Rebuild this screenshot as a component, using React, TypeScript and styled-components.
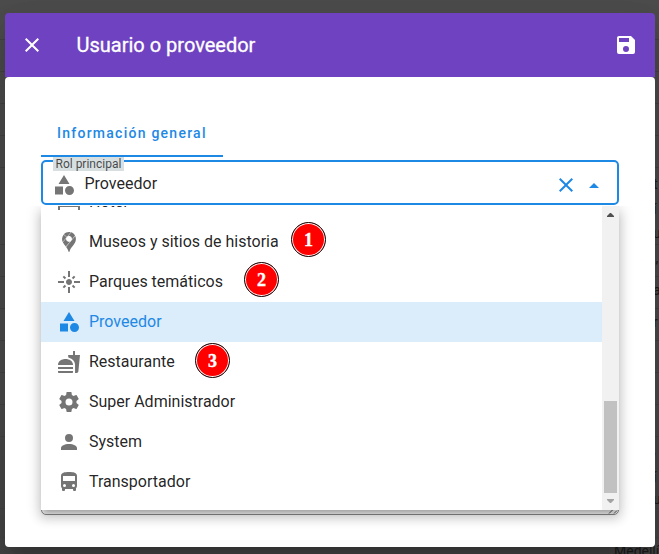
import React from "react";
import styled, { createGlobalStyle } from "styled-components";

const GlobalStyle = createGlobalStyle`
  *, *::before, *::after { box-sizing: border-box; }
  body { margin: 0; background: #424242; font-family: Roboto, sans-serif; overflow: hidden; }
`;

const icons = {
  close:
    "M19,6.41L17.59,5L12,10.59L6.41,5L5,6.41L10.59,12L5,17.59L6.41,19L12,13.41L17.59,19L19,17.59L13.41,12L19,6.41Z",
  save:
    "M15,9H5V5H15M12,19A3,3 0 0,1 9,16A3,3 0 0,1 12,13A3,3 0 0,1 15,16A3,3 0 0,1 12,19M17,3H5C3.89,3 3,3.9 3,5V19A2,2 0 0,0 5,21H19A2,2 0 0,0 21,19V7L17,3Z",
  menuUp: "M7,15L12,10L17,15H7Z",
  shape:
    "M11,13.5V21.5H3V13.5H11M12,2L17.5,11H6.5L12,2M17.5,13C20,13 22,15 22,17.5C22,20 20,22 17.5,22C15,22 13,20 13,17.5C13,15 15,13 17.5,13Z",
  bed:
    "M19,7H11V14H3V5H1V20H3V17H21V20H23V11A4,4 0 0,0 19,7M7,13A3,3 0 0,0 10,10A3,3 0 0,0 7,7A3,3 0 0,0 4,10A3,3 0 0,0 7,13Z",
  maps:
    "M18.27 6C19.28 8.17 19.05 10.73 17.94 12.81C17 14.5 15.65 15.93 14.5 17.5C14 18.2 13.5 18.95 13.13 19.76C13 20.03 12.91 20.31 12.81 20.59C12.71 20.87 12.62 21.15 12.53 21.43C12.44 21.69 12.33 22 12 22H12C11.61 22 11.5 21.56 11.42 21.26C11.18 20.53 10.94 19.83 10.57 19.16C10.15 18.37 9.62 17.64 9.08 16.93L18.27 6M9.12 8.42L5.82 12.34C6.43 13.63 7.34 14.73 8.21 15.83C8.42 16.08 8.63 16.34 8.83 16.61L13 11.67L12.96 11.68C11.5 12.18 9.88 11.44 9.3 10C9.22 9.83 9.16 9.63 9.12 9.43C9.06 9.06 9.05 8.79 9.12 8.42L9.12 8.42M6.58 4.62L6.57 4.63C4.95 6.68 4.67 9.53 5.64 11.94L9.63 7.2L9.58 7.15L6.58 4.62M14.22 2.36L11 6.17L11.04 6.16C12.38 5.7 13.88 6.28 14.56 7.5C14.71 7.78 14.83 8.08 14.87 8.38C14.93 8.76 14.95 9.03 14.88 9.4L14.88 9.41L18.08 5.61C17.24 4.09 15.87 2.93 14.23 2.37L14.22 2.36M9.89 6.89L13.8 2.24L13.76 2.23C13.18 2.08 12.59 2 12 2C10.03 2 8.17 2.85 6.85 4.31L6.83 4.32L9.89 6.89Z",
  flare:
    "M7 11H1v2h6v-2zm2.17-3.24L7.05 5.64 5.64 7.05l2.12 2.12 1.41-1.41zM13 1h-2v6h2V1zm5.36 6.05l-1.41-1.41-2.12 2.12 1.41 1.41 2.12-2.12zM17 11v2h6v-2h-6zm-5-2c-1.66 0-3 1.34-3 3s1.34 3 3 3 3-1.34 3-3-1.34-3-3-3zm2.83 7.24l2.12 2.12 1.41-1.41-2.12-2.12-1.41 1.41zm-9.19.71l1.41 1.41 2.12-2.12-1.41-1.41-2.12 2.12zM11 23h2v-6h-2v6z",
  food:
    "M18.06 22.99h1.66c.84 0 1.53-.64 1.63-1.46L23 5.05h-5V1h-1.97v4.05h-4.97l.3 2.34c1.71.47 3.31 1.32 4.27 2.26 1.44 1.42 2.43 2.89 2.43 5.29v8.05zM1 21.99V21h15.03v.99c0 .55-.45 1-1.01 1H2.01c-.56 0-1.01-.45-1.01-1zm15.03-7c0-8-15.03-8-15.03 0h15.03zM1.02 17h15v2h-15z",
  cog:
    "M12,15.5A3.5,3.5 0 0,1 8.5,12A3.5,3.5 0 0,1 12,8.5A3.5,3.5 0 0,1 15.5,12A3.5,3.5 0 0,1 12,15.5M19.43,12.97C19.47,12.65 19.5,12.33 19.5,12C19.5,11.67 19.47,11.34 19.43,11L21.54,9.37C21.73,9.22 21.78,8.95 21.66,8.73L19.66,5.27C19.54,5.05 19.27,4.96 19.05,5.05L16.56,6.05C16.04,5.66 15.5,5.32 14.87,5.07L14.5,2.42C14.46,2.18 14.25,2 14,2H10C9.75,2 9.54,2.18 9.5,2.42L9.13,5.07C8.5,5.32 7.96,5.66 7.44,6.05L4.95,5.05C4.73,4.96 4.46,5.05 4.34,5.27L2.34,8.73C2.21,8.95 2.27,9.22 2.46,9.37L4.57,11C4.53,11.34 4.5,11.67 4.5,12C4.5,12.33 4.53,12.65 4.57,12.97L2.46,14.63C2.27,14.78 2.21,15.05 2.34,15.27L4.34,18.73C4.46,18.95 4.73,19.03 4.95,18.95L7.44,17.94C7.96,18.34 8.5,18.68 9.13,18.93L9.5,21.58C9.54,21.82 9.75,22 10,22H14C14.25,22 14.46,21.82 14.5,21.58L14.87,18.93C15.5,18.67 16.04,18.34 16.56,17.94L19.05,18.95C19.27,19.03 19.54,18.95 19.66,18.73L21.66,15.27C21.78,15.05 21.73,14.78 21.54,14.63L19.43,12.97Z",
  account:
    "M12,4A4,4 0 0,1 16,8A4,4 0 0,1 12,12A4,4 0 0,1 8,8A4,4 0 0,1 12,4M12,14C16.42,14 20,15.79 20,18V20H4V18C4,15.79 7.58,14 12,14Z",
  bus:
    "M18,11H6V6H18M16.5,17A1.5,1.5 0 0,1 15,15.5A1.5,1.5 0 0,1 16.5,14A1.5,1.5 0 0,1 18,15.5A1.5,1.5 0 0,1 16.5,17M7.5,17A1.5,1.5 0 0,1 6,15.5A1.5,1.5 0 0,1 7.5,14A1.5,1.5 0 0,1 9,15.5A1.5,1.5 0 0,1 7.5,17M4,16C4,16.88 4.39,17.67 5,18.22V20A1,1 0 0,0 6,21H7A1,1 0 0,0 8,20V19H16V20A1,1 0 0,0 17,21H18A1,1 0 0,0 19,20V18.22C19.61,17.67 20,16.88 20,16V6C20,2.5 16.42,2 12,2C7.58,2 4,2.5 4,6V16Z",
};
type IconName = keyof typeof icons;

const Svg = styled.svg`
  display: block;
  flex: none;
  fill: currentColor;
`;
const Icon = ({ name, size = 24 }: { name: IconName; size?: number }) => (
  <Svg width={size} height={size} viewBox="0 0 24 24" aria-hidden="true">
    <path d={icons[name]} />
  </Svg>
);

const Page = styled.div`
  position: relative;
  width: 659px;
  height: 554px;
  overflow: hidden;
  padding: 13px 4px 0 5px;
  background: linear-gradient(#4c4c4c, #4b4b4b 80px, #4a4a4a 400px, #444);
`;

/* Dimmed page behind the dialog; only its edges stay visible. */
const Behind = styled.div`
  position: absolute;
  inset: 0;
  display: flex;
  flex-direction: column;
  padding-top: 39px;
  color: #1c1c1c;
  font-size: 14px;
`;
const BehindRow = styled.div<{ $h: number; $line?: boolean; $x?: number }>`
  flex: none;
  height: ${(p) => p.$h}px;
  padding-left: ${(p) => p.$x ?? 653}px;
  line-height: 26px;
  white-space: nowrap;
  border-top: 1px solid ${(p) => (p.$line ? "#424242" : "transparent")};
`;

const Dialog = styled.div`
  position: relative;
  width: 650px;
  height: 534px;
  border-radius: 4px;
  box-shadow: 0 11px 15px -7px rgba(0, 0, 0, 0.2), 0 24px 38px 3px rgba(0, 0, 0, 0.1),
    0 9px 46px 8px rgba(0, 0, 0, 0.06);
`;
const Toolbar = styled.header`
  display: flex;
  align-items: center;
  height: 64px;
  padding: 0 17px 0 15px;
  border-radius: 4px 4px 0 0;
  background: #6f42c1;
  color: #fff;
`;
const ToolButton = styled.button`
  display: flex;
  padding: 0;
  border: 0;
  background: none;
  color: inherit;
`;
const Title = styled.h1`
  flex: 1;
  margin: 0 0 0 32.5px;
  font-size: 20px;
  font-weight: 400;
  line-height: 30px;
  -webkit-text-stroke: 0.3px currentColor;
`;
const Body = styled.main`
  height: 470px;
  padding: 32px 36px;
  border-radius: 4px;
  background: #fff;
`;
const Tab = styled.div`
  width: 182px;
  height: 48px;
  padding: 0 16px;
  border-bottom: 2px solid #1e88e5;
  color: #1e88e5;
  font-size: 14px;
  font-weight: 500;
  letter-spacing: 1.25px;
  line-height: 48px;
  white-space: nowrap;
`;
const SelectWrap = styled.div`
  position: relative;
  margin-top: 3px;
`;
const Select = styled.div`
  display: flex;
  align-items: center;
  height: 45px;
  padding: 4px 11px 0 9px;
  border: 2px solid #1e88e5;
  border-radius: 5px;
  color: #1e88e5;
`;
const Prefix = styled.span`
  color: #757575;
`;
const Value = styled.span`
  flex: 1;
  margin-left: 8.5px;
  margin-top: -2px;
  color: rgba(0, 0, 0, 0.87);
  font-size: 16px;
  line-height: 24px;
`;
const Controls = styled.div`
  display: flex;
  gap: 4px;
`;
const FieldLabel = styled.label`
  position: absolute;
  left: 12px;
  top: -3px;
  width: 71px;
  height: 14px;
  padding-left: 2.5px;
  background: #d8dfe1;
  color: rgba(0, 0, 0, 0.7);
  font-size: 12px;
  line-height: 14px;
  white-space: nowrap;
`;
const Menu = styled.div`
  position: absolute;
  z-index: 2;
  left: 0;
  top: 46px;
  display: flex;
  width: 578px;
  height: 304px;
  background: #fff;
  box-shadow: 0 5px 5px -3px rgba(0, 0, 0, 0.2), 0 8px 10px 1px rgba(0, 0, 0, 0.14),
    0 3px 14px 2px rgba(0, 0, 0, 0.12);
  clip-path: inset(0 -20px -30px -20px);
`;
const Options = styled.div`
  display: flex;
  flex: 1;
  flex-direction: column;
  justify-content: flex-end;
  padding-bottom: 8px;
  overflow: hidden;
`;
const Option = styled.div<{ $active?: boolean }>`
  display: flex;
  flex: none;
  align-items: center;
  gap: 8px;
  height: 40px;
  padding: 0 16px;
  background: ${(p) => (p.$active ? "#dbecfb" : "transparent")};
  color: ${(p) => (p.$active ? "#1e88e5" : "#757575")};
`;
const OptionText = styled.span<{ $active?: boolean }>`
  margin-top: -1px;
  color: ${(p) => (p.$active ? "inherit" : "rgba(0, 0, 0, 0.87)")};
  font-size: 16px;
  line-height: 24px;
`;
const Scrollbar = styled.div`
  display: flex;
  flex-direction: column;
  align-items: center;
  justify-content: space-between;
  width: 17px;
  background: #f1f1f1;
`;
const Arrow = styled.svg<{ $off?: boolean }>`
  display: block;
  width: 17px;
  height: 17px;
  fill: ${(p) => (p.$off ? "#a3a3a3" : "#505050")};
`;
const Thumb = styled.div`
  width: 13px;
  height: 92px;
  margin-top: auto;
  background: #c1c1c1;
`;
const NotesArea = styled.div`
  display: flex;
  align-items: flex-end;
  justify-content: flex-end;
  height: 60px;
  margin-top: 250px;
  border: 1px solid #8c8c8c;
  border-radius: 5px;
`;
const Marker = styled.span<{ $x: number; $y: number }>`
  position: absolute;
  z-index: 3;
  left: ${(p) => p.$x}px;
  top: ${(p) => p.$y}px;
  width: 35px;
  height: 35px;
  border: 1.5px solid #111;
  border-radius: 50%;
  background: #f00;
  box-shadow: inset 0 0 0 1px #fff;
  color: #fff;
  font: bold 18px/35px "Liberation Serif", serif;
  -webkit-text-stroke: 0.4px #fff;
  text-align: center;
`;

const options: { icon: IconName; label: string; active?: boolean }[] = [
  { icon: "bed", label: "Hotel" },
  { icon: "maps", label: "Museos y sitios de historia" },
  { icon: "flare", label: "Parques temáticos" },
  { icon: "shape", label: "Proveedor", active: true },
  { icon: "food", label: "Restaurante" },
  { icon: "cog", label: "Super Administrador" },
  { icon: "account", label: "System" },
  { icon: "bus", label: "Transportador" },
];

const behindRows: { h: number; text?: string; line?: boolean; x?: number }[] = [
  { h: 32, line: true },
  { h: 32, line: true },
  { h: 32, line: true },
  { h: 32, line: true },
  { h: 3, line: true },
  { h: 25, text: "t" },
  { h: 24, text: "í" },
  { h: 25, text: "u" },
  { h: 32, text: "a,", line: true, x: 648 },
  { h: 32, text: "a", line: true },
  { h: 32, text: "r", line: true },
  { h: 32, line: true },
  { h: 32, line: true },
  { h: 32, line: true },
  { h: 27, text: ",", line: true },
  { h: 22, text: "í" },
  { h: 23, text: "u" },
  { h: 29, line: true },
  { h: 30, text: "Medellí", line: true, x: 614 },
];

export default function App() {
  return (
    <>
      <GlobalStyle />
      <Page>
        <Behind aria-hidden="true">
          {behindRows.map((r, i) => (
            <BehindRow key={i} $h={r.h} $line={r.line} $x={r.x}>
              {r.text}
            </BehindRow>
          ))}
        </Behind>
        <Dialog role="dialog">
          <Toolbar>
            <ToolButton aria-label="Cerrar">
              <Icon name="close" />
            </ToolButton>
            <Title>Usuario o proveedor</Title>
            <ToolButton aria-label="Guardar">
              <Icon name="save" />
            </ToolButton>
          </Toolbar>
          <Body>
            <Tab>Información general</Tab>
            <SelectWrap>
              <Select>
                <Prefix>
                  <Icon name="shape" />
                </Prefix>
                <Value>Proveedor</Value>
                <Controls>
                  <Icon name="close" />
                  <Icon name="menuUp" />
                </Controls>
              </Select>
              <FieldLabel>Rol principal</FieldLabel>
              <Menu>
                <Options>
                  {options.map((o) => (
                    <Option key={o.label} $active={o.active}>
                      <Icon name={o.icon} />
                      <OptionText $active={o.active}>{o.label}</OptionText>
                    </Option>
                  ))}
                </Options>
                <Scrollbar>
                  <Arrow viewBox="0 0 17 17">
                    <path d="M5 11h7v-1l-3-3h-1l-3 3z" />
                  </Arrow>
                  <Thumb />
                  <Arrow viewBox="0 0 17 17" $off>
                    <path d="M5 6h7v1l-3 3h-1l-3-3z" />
                  </Arrow>
                </Scrollbar>
              </Menu>
              <Marker $x={250} $y={62}>1</Marker>
              <Marker $x={203} $y={102}>2</Marker>
              <Marker $x={154} $y={183}>3</Marker>
            </SelectWrap>
            <NotesArea>
              <svg width="10" height="8" viewBox="0 0 10 8" aria-hidden="true">
                <path d="M1 7.5l6-6M6 7.5l3-3" stroke="#555" fill="none" />
              </svg>
            </NotesArea>
          </Body>
        </Dialog>
      </Page>
    </>
  );
}
